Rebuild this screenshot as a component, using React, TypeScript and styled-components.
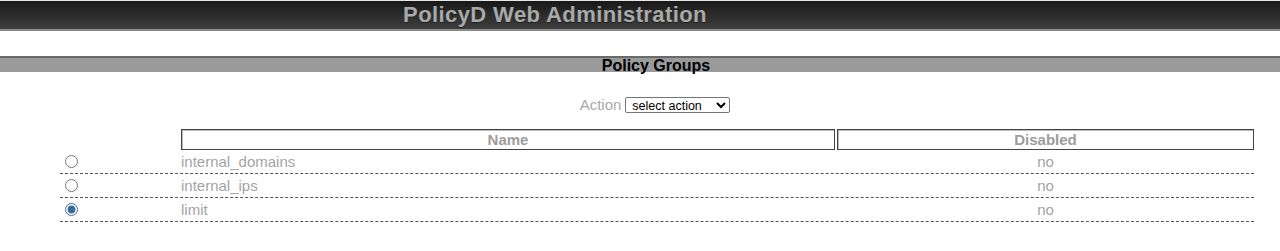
import { styled, createGlobalStyle } from "styled-components";

const GlobalStyle = createGlobalStyle`
  body {
    margin: 0;
    background: #fff;
    font-family: "Liberation Sans", Arial, sans-serif;
  }
`;

interface PolicyGroup {
  name: string;
  disabled: boolean;
  selected?: boolean;
}

const groups: PolicyGroup[] = [
  { name: "internal_domains", disabled: false },
  { name: "internal_ips", disabled: false },
  { name: "limit", disabled: false, selected: true },
];

const Page = styled.div`
  width: 1280px;
  display: flex;
  flex-direction: column;
`;

const Header = styled.header`
  height: 28px;
  border-top: 1px solid #e8e8e8;
  border-bottom: 2px solid #8a8a8a;
  background: linear-gradient(#181818, #2e2e2e 55%, #3e3e3e);
  display: flex;
  align-items: center;
  justify-content: center;
  padding-right: 170px;
`;

const Title = styled.h1`
  margin: 0;
  font-size: 22px;
  font-weight: 700;
  line-height: 26px;
  color: #a9a9a9;
  text-shadow: 0 1px 0 #222;
  letter-spacing: 0.4px;
`;

const Section = styled.section`
  margin-top: 25px;
  display: flex;
  flex-direction: column;
  align-items: center;
`;

const SectionBar = styled.h2`
  align-self: stretch;
  margin: 0;
  height: 14px;
  line-height: 16px;
  border-top: 2px solid #6a6a6a;
  background: #9a9a9a;
  padding-left: 32px;
  text-align: center;
  font-size: 16px;
  font-weight: 700;
  color: #000;
  overflow: visible;
`;

const ActionRow = styled.div`
  margin-top: 24px;
  padding-left: 30px;
  display: flex;
  align-items: center;
  gap: 4px;
  font-size: 15px;
  color: #a8a8a8;
`;

const ActionSelect = styled.select`
  width: 105px;
  height: 16px;
  padding: 0 2px;
  font-family: "Liberation Sans", Arial, sans-serif;
  font-size: 12.5px;
  color: #000;
  border: 1px solid #767676;
  border-radius: 2px;
  background: #fff;
`;

const Table = styled.div`
  align-self: flex-start;
  margin-top: 16px;
  margin-left: 60px;
  width: 1194px;
  display: flex;
  flex-direction: column;
`;

const HeadRow = styled.div`
  display: grid;
  grid-template-columns: 119px 654px 417px;
  column-gap: 2px;
  height: 21px;
`;

const HeadCell = styled.div<{ $blank?: boolean }>`
  border: ${(p) => (p.$blank ? "none" : "1px solid #444")};
  box-shadow: ${(p) => (p.$blank ? "none" : "inset 1px 1px 0 #bbb")};
  text-align: center;
  font-size: 15px;
  font-weight: 700;
  line-height: 19px;
  color: #9c9c9c;
`;

const Row = styled.div`
  display: grid;
  grid-template-columns: 121px 656px 417px;
  height: 23px;
  border-bottom: 1px dashed #555;
  align-items: center;
  font-size: 15px;
  color: #a4a4a4;
`;

const RadioCell = styled.div`
  display: flex;
  align-items: center;
  padding-left: 5px;
`;

const Radio = styled.input`
  margin: 0;
  width: 13px;
  height: 13px;
  accent-color: #3b6a99;
`;

const NameCell = styled.div`
  white-space: nowrap;
`;

const StatusCell = styled.div`
  text-align: center;
`;

export default function App() {
  return (
    <Page>
      <GlobalStyle />
      <Header>
        <Title>PolicyD Web Administration</Title>
      </Header>
      <Section>
        <SectionBar>Policy Groups</SectionBar>
        <ActionRow>
          Action
          <ActionSelect defaultValue="">
            <option value="">select action</option>
            <option value="add">Add</option>
            <option value="change">Change</option>
            <option value="remove">Remove</option>
          </ActionSelect>
        </ActionRow>
        <Table>
          <HeadRow>
            <HeadCell $blank />
            <HeadCell>Name</HeadCell>
            <HeadCell>Disabled</HeadCell>
          </HeadRow>
          {groups.map((g) => (
            <Row key={g.name}>
              <RadioCell>
                <Radio
                  type="radio"
                  name="policy_group"
                  value={g.name}
                  defaultChecked={g.selected}
                />
              </RadioCell>
              <NameCell>{g.name}</NameCell>
              <StatusCell>{g.disabled ? "yes" : "no"}</StatusCell>
            </Row>
          ))}
        </Table>
      </Section>
    </Page>
  );
}
